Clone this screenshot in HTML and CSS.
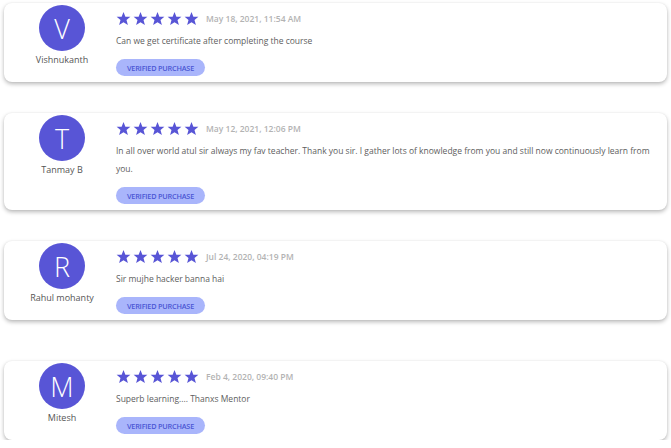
FILE: index.html
```html
<!DOCTYPE html>
<html>
<head>
<meta charset="utf-8">
<link rel="stylesheet" href="styles.css">
</head>
<body>
<div class="reviews">
  <div class="card">
    <div class="who">
      <div class="avatar">V</div>
      <div class="name">Vishnukanth</div>
    </div>
    <div class="body">
      <div class="meta">
        <div class="stars">
          <svg viewBox="0 0 24 24"><polygon points="12,1.5 15,9 23,9.3 16.8,14.3 19,22.3 12,17.8 5,22.3 7.2,14.3 1,9.3 9,9"/></svg>
          <svg viewBox="0 0 24 24"><polygon points="12,1.5 15,9 23,9.3 16.8,14.3 19,22.3 12,17.8 5,22.3 7.2,14.3 1,9.3 9,9"/></svg>
          <svg viewBox="0 0 24 24"><polygon points="12,1.5 15,9 23,9.3 16.8,14.3 19,22.3 12,17.8 5,22.3 7.2,14.3 1,9.3 9,9"/></svg>
          <svg viewBox="0 0 24 24"><polygon points="12,1.5 15,9 23,9.3 16.8,14.3 19,22.3 12,17.8 5,22.3 7.2,14.3 1,9.3 9,9"/></svg>
          <svg viewBox="0 0 24 24"><polygon points="12,1.5 15,9 23,9.3 16.8,14.3 19,22.3 12,17.8 5,22.3 7.2,14.3 1,9.3 9,9"/></svg>
        </div>
        <span class="date">May 18, 2021, 11:54 AM</span>
      </div>
      <p class="text">Can we get certificate after completing the course</p>
      <span class="badge">VERIFIED PURCHASE</span>
    </div>
  </div>

  <div class="card">
    <div class="who">
      <div class="avatar">T</div>
      <div class="name">Tanmay B</div>
    </div>
    <div class="body">
      <div class="meta">
        <div class="stars">
          <svg viewBox="0 0 24 24"><polygon points="12,1.5 15,9 23,9.3 16.8,14.3 19,22.3 12,17.8 5,22.3 7.2,14.3 1,9.3 9,9"/></svg>
          <svg viewBox="0 0 24 24"><polygon points="12,1.5 15,9 23,9.3 16.8,14.3 19,22.3 12,17.8 5,22.3 7.2,14.3 1,9.3 9,9"/></svg>
          <svg viewBox="0 0 24 24"><polygon points="12,1.5 15,9 23,9.3 16.8,14.3 19,22.3 12,17.8 5,22.3 7.2,14.3 1,9.3 9,9"/></svg>
          <svg viewBox="0 0 24 24"><polygon points="12,1.5 15,9 23,9.3 16.8,14.3 19,22.3 12,17.8 5,22.3 7.2,14.3 1,9.3 9,9"/></svg>
          <svg viewBox="0 0 24 24"><polygon points="12,1.5 15,9 23,9.3 16.8,14.3 19,22.3 12,17.8 5,22.3 7.2,14.3 1,9.3 9,9"/></svg>
        </div>
        <span class="date">May 12, 2021, 12:06 PM</span>
      </div>
      <p class="text">In all over world atul sir always my fav teacher. Thank you sir. I gather lots of knowledge from you and still now continuously learn from you.</p>
      <span class="badge">VERIFIED PURCHASE</span>
    </div>
  </div>

  <div class="card">
    <div class="who">
      <div class="avatar">R</div>
      <div class="name">Rahul mohanty</div>
    </div>
    <div class="body">
      <div class="meta">
        <div class="stars">
          <svg viewBox="0 0 24 24"><polygon points="12,1.5 15,9 23,9.3 16.8,14.3 19,22.3 12,17.8 5,22.3 7.2,14.3 1,9.3 9,9"/></svg>
          <svg viewBox="0 0 24 24"><polygon points="12,1.5 15,9 23,9.3 16.8,14.3 19,22.3 12,17.8 5,22.3 7.2,14.3 1,9.3 9,9"/></svg>
          <svg viewBox="0 0 24 24"><polygon points="12,1.5 15,9 23,9.3 16.8,14.3 19,22.3 12,17.8 5,22.3 7.2,14.3 1,9.3 9,9"/></svg>
          <svg viewBox="0 0 24 24"><polygon points="12,1.5 15,9 23,9.3 16.8,14.3 19,22.3 12,17.8 5,22.3 7.2,14.3 1,9.3 9,9"/></svg>
          <svg viewBox="0 0 24 24"><polygon points="12,1.5 15,9 23,9.3 16.8,14.3 19,22.3 12,17.8 5,22.3 7.2,14.3 1,9.3 9,9"/></svg>
        </div>
        <span class="date">Jul 24, 2020, 04:19 PM</span>
      </div>
      <p class="text">Sir mujhe hacker banna hai</p>
      <span class="badge">VERIFIED PURCHASE</span>
    </div>
  </div>

  <div class="card card-last">
    <div class="who">
      <div class="avatar">M</div>
      <div class="name">Mitesh</div>
    </div>
    <div class="body">
      <div class="meta">
        <div class="stars">
          <svg viewBox="0 0 24 24"><polygon points="12,1.5 15,9 23,9.3 16.8,14.3 19,22.3 12,17.8 5,22.3 7.2,14.3 1,9.3 9,9"/></svg>
          <svg viewBox="0 0 24 24"><polygon points="12,1.5 15,9 23,9.3 16.8,14.3 19,22.3 12,17.8 5,22.3 7.2,14.3 1,9.3 9,9"/></svg>
          <svg viewBox="0 0 24 24"><polygon points="12,1.5 15,9 23,9.3 16.8,14.3 19,22.3 12,17.8 5,22.3 7.2,14.3 1,9.3 9,9"/></svg>
          <svg viewBox="0 0 24 24"><polygon points="12,1.5 15,9 23,9.3 16.8,14.3 19,22.3 12,17.8 5,22.3 7.2,14.3 1,9.3 9,9"/></svg>
          <svg viewBox="0 0 24 24"><polygon points="12,1.5 15,9 23,9.3 16.8,14.3 19,22.3 12,17.8 5,22.3 7.2,14.3 1,9.3 9,9"/></svg>
        </div>
        <span class="date">Feb 4, 2020, 09:40 PM</span>
      </div>
      <p class="text">Superb learning.... Thanxs Mentor</p>
      <span class="badge">VERIFIED PURCHASE</span>
    </div>
  </div>
</div>
</body>
</html>
```

FILE: styles.css
```css
html, body {
  margin: 0;
  padding: 0;
  background: #ffffff;
}

body {
  font-family: "Open Sans", "Liberation Sans", sans-serif;
  color: #555;
}

.reviews {
  display: flex;
  flex-direction: column;
  gap: 31px;
  padding: 3px 4px 0 4px;
}

.card {
  display: flex;
  background: #fff;
  border-radius: 8px;
  box-shadow: 0 2px 4px rgba(0, 0, 0, 0.28), 0 0 2px rgba(0, 0, 0, 0.06);
  padding: 2px 14px 6px 0;
}

.card-last {
  margin-top: 10px;
}

.who {
  width: 108px;
  padding-left: 4px;
  flex: none;
  display: flex;
  flex-direction: column;
  align-items: center;
}

.avatar {
  width: 46px;
  height: 46px;
  border-radius: 50%;
  background: #5855d6;
  color: #fff;
  font-size: 27px;
  font-weight: 300;
  display: flex;
  align-items: center;
  justify-content: center;
  line-height: 1;
}

.name {
  margin-top: 2px;
  font-size: 9px;
  line-height: 14px;
  color: #555;
  white-space: nowrap;
}

.body {
  flex: 1;
  padding-top: 5px;
  display: flex;
  flex-direction: column;
  align-items: flex-start;
}

.meta {
  display: flex;
  align-items: center;
  height: 16px;
}

.stars {
  display: flex;
  gap: 2px;
}

.stars svg {
  width: 15px;
  height: 15px;
  fill: #5855d6;
  display: block;
}

.date {
  margin-left: 7px;
  font-size: 8.5px;
  font-weight: 600;
  color: #b3b3b3;
}

.text {
  margin: 6px 0 0 0;
  font-size: 8.5px;
  line-height: 18px;
  color: #606060;
}

.badge {
  margin-top: 9px;
  display: inline-flex;
  align-items: center;
  justify-content: center;
  width: 89px;
  height: 17px;
  border-radius: 9px;
  background: #a9b5fb;
  color: #4a56d4;
  font-size: 7.3px;
  font-weight: 600;
  letter-spacing: -0.2px;
}
```
